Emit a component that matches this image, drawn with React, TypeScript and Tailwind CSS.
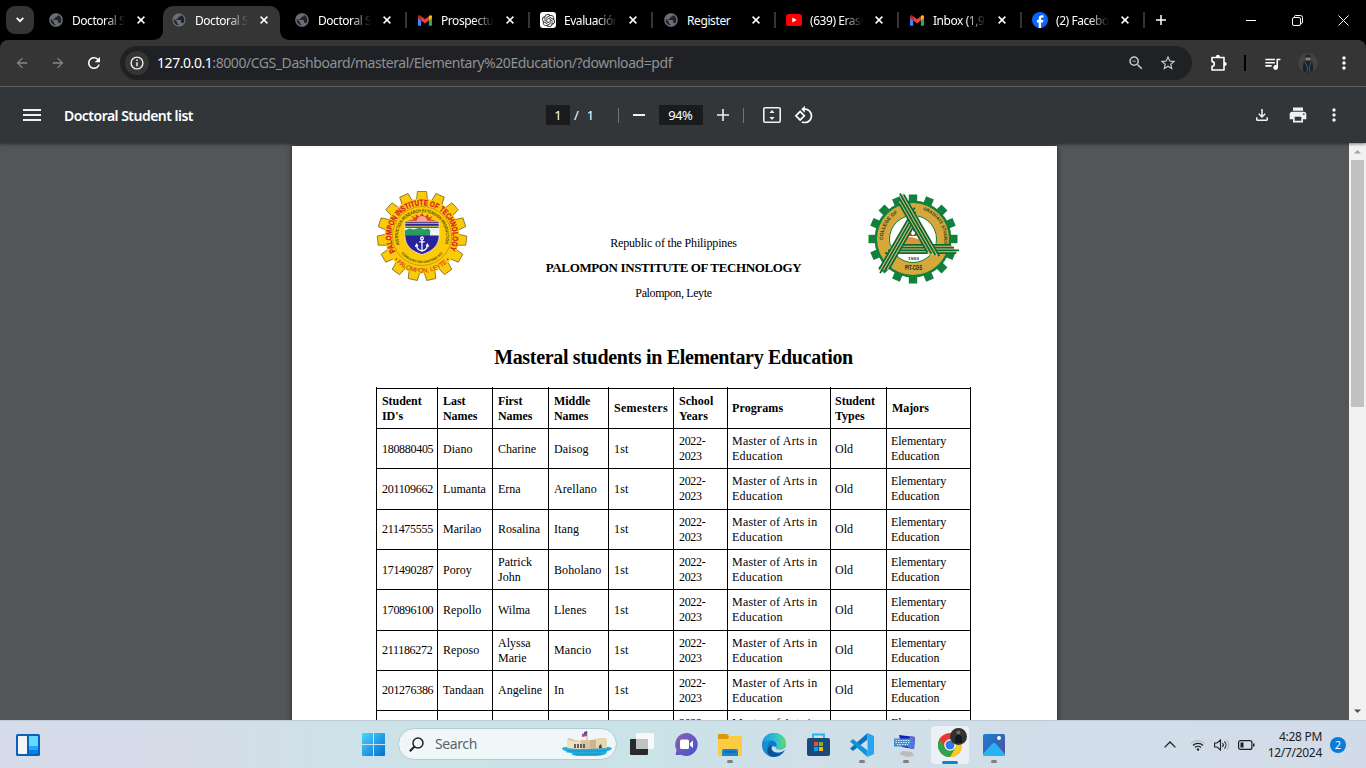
import React from "react";
import {
  MdArrowBack, MdArrowForward, MdRefresh, MdZoomOut, MdStarBorder, MdQueueMusic,
  MdMoreVert, MdMenu, MdPrint, MdOutlineFileDownload, MdRotate90DegreesCcw, MdPublic,
} from "react-icons/md";
import { SiOpenai } from "react-icons/si";

const ui = "font-['Noto_Sans','Open_Sans',sans-serif]";

function Globe() {
  return (
    <span className="flex h-[14px] w-[14px] rounded-full bg-[#20242a]">
      <MdPublic className="-m-px h-4 w-4 shrink-0 text-[#6b6f75]" />
    </span>
  );
}

function Gmail() {
  return (
    <svg viewBox="0 0 16 12" className="h-[11px] w-[14px]">
      <path d="M0 1.5V11a1 1 0 0 0 1 1h2.6V5.5z" fill="#4285f4" />
      <path d="M16 1.5V11a1 1 0 0 1-1 1h-2.6V5.5z" fill="#34a853" />
      <path d="M12.4 1.2V6L16 3.2V1.6C16 .1 14.300-.5 13.300.4z" fill="#fbbc04" />
      <path d="M3.600 6V1.200L8 4.600l4.400-3.400V6L8 9.300z" fill="#ea4335" />
      <path d="M0 1.600v1.600L3.600 6V1.200L2.700.4C1.700-.5 0 .1 0 1.600z" fill="#c5221f" />
    </svg>
  );
}

function Gpt() {
  return (
    <span className="flex h-4 w-4 items-center justify-center rounded-[3px] bg-white">
      <SiOpenai className="h-[13px] w-[13px] text-[#222]" />
    </span>
  );
}

function YouTube() {
  return (
    <svg viewBox="0 0 16 12" className="h-3 w-4">
      <rect width="16" height="12" rx="2.600" fill="#f00" />
      <path d="M6.300 3.500v5L10.700 6z" fill="#fff" />
    </svg>
  );
}

function Facebook() {
  return (
    <svg viewBox="0 0 16 16" className="h-4 w-4">
      <circle cx="8" cy="8" r="8" fill="#0866ff" />
      <path d="M6.700 15.900V10.500H4.900V8h1.800V6.700c0-2.400 1.100-3.500 3.400-3.500.5 0 1.100.1 1.400.2v2.100h-.9c-1.100 0-1.500.4-1.500 1.500v1h2.300l-.4 2.500H9.100v5.400z" fill="#fff" />
    </svg>
  );
}

function Cross({ className }: { className: string }) {
  return (
    <svg viewBox="0 0 8 8" className={className}>
      <path d="M.6.600l6.800 6.800M7.400.600L.6 7.400" stroke="currentColor" strokeWidth="1.500" />
    </svg>
  );
}

const tabs = [
  { icon: <Globe />, title: "Doctoral Student list", fade: true },
  { icon: <Globe />, title: "Doctoral Student list", active: true, fade: true },
  { icon: <Globe />, title: "Doctoral Student list", sep: true, fade: true },
  { icon: <Gmail />, title: "Prospectus", sep: true, fade: true },
  { icon: <Gpt />, title: "Evaluación", sep: true, fade: true },
  { icon: <Globe />, title: "Register", sep: true },
  { icon: <YouTube />, title: "(639) Erasmus", sep: true, fade: true },
  { icon: <Gmail />, title: "Inbox (1,932)", sep: true, fade: true },
  { icon: <Facebook />, title: "(2) Facebook", sep: true, fade: true },
];

function TabStrip() {
  return (
    <div className="flex h-10 shrink-0 bg-black text-white">
      <div className="flex w-10 shrink-0 pl-1.5 pt-1.5">
        <div className="flex h-7 w-7 items-center justify-center rounded-[9px] bg-[#353535]">
          <svg viewBox="0 0 8 6" className="h-1.5 w-2"><path d="M.7.800L4 4.200 7.300.800" fill="none" stroke="#fff" strokeWidth="1.700" /></svg>
        </div>
      </div>
      {tabs.map((t, i) => (
        <div key={i} className="relative flex h-full w-[123px] shrink-0 pt-1.5">
          <div className={t.active ? "flex h-[34px] w-[117px] items-start rounded-t-[10px] bg-[#353535]" : "flex h-[34px] w-[117px] items-start"}>
            <div className="ml-2 flex h-7 w-4 items-center justify-center">{t.icon}</div>
            <div className={t.fade
              ? "ml-2 h-7 w-[53px] overflow-hidden whitespace-nowrap text-[12px] leading-[30px] tracking-[-0.45px] [mask-image:linear-gradient(to_right,black_62%,transparent_100%)]"
              : "ml-2 h-7 w-[53px] overflow-hidden whitespace-nowrap text-[12px] leading-[30px] tracking-[-0.4px]"}>{t.title}</div>
            <div className="ml-3 flex h-7 w-2 items-center"><Cross className="h-2 w-2" /></div>
          </div>
          {t.sep && <div className="mt-1.5 ml-[2px] h-4 w-[2px] bg-[#353535]" />}
          {t.active && (
            <>
              <svg viewBox="0 0 10 10" className="absolute -left-2.5 bottom-0 h-2.5 w-2.5"><path d="M10 0v10H0C6 10 10 6 10 0z" fill="#353535" /></svg>
              <svg viewBox="0 0 10 10" className="absolute left-[117px] bottom-0 h-2.5 w-2.5"><path d="M0 0v10h10C4 10 0 6 0 0z" fill="#353535" /></svg>
            </>
          )}
        </div>
      ))}
      <div className="flex w-[28px] items-center justify-center">
        <svg viewBox="0 0 10 10" className="h-2.5 w-2.5"><path d="M5 0v10M0 5h10" stroke="#fff" strokeWidth="1.500" /></svg>
      </div>
      <div className="ml-auto flex items-center">
        <div className="flex w-[46px] justify-center"><div className="h-px w-2.5 bg-white" /></div>
        <div className="flex w-[46px] justify-center">
          <svg viewBox="0 0 11 11" className="h-[11px] w-[11px]" fill="none" stroke="#fff">
            <rect x=".5" y="2.500" width="8" height="8" rx="1.500" /><path d="M2.500 2V1.500a1 1 0 0 1 1-1H8.500a2 2 0 0 1 2 2V7a1.500 1.500 0 0 1-1.500 1.500" />
          </svg>
        </div>
        <div className="flex w-[46px] justify-center">
          <svg viewBox="0 0 11 11" className="h-[11px] w-[11px]" stroke="#fff"><path d="M.5.500l10 10M10.500.500l-10 10" /></svg>
        </div>
      </div>
    </div>
  );
}

function AddressBar() {
  return (
    <div className="h-[47px] shrink-0 bg-black">
      <div className="flex h-full items-center rounded-t-lg border-b border-[#696969] bg-[#353535]">
        <MdArrowBack className="ml-[14px] h-4 w-4 text-[#858585]" />
        <MdArrowForward className="ml-5 h-4 w-4 text-[#858585]" />
        <MdRefresh className="ml-[19px] h-[18px] w-[18px] text-white" />
        <div className="ml-[17px] flex h-[34px] w-[1072px] items-center rounded-full bg-[#202124]">
          <div className="ml-[5px] flex h-6 w-6 items-center justify-center rounded-full bg-[#353535]">
            <svg viewBox="0 0 14 14" className="h-[14px] w-[14px]"><circle cx="7" cy="7" r="5.900" fill="none" stroke="#eee" strokeWidth="1.400" /><path d="M7 6.200v4M7 3.500v1.500" stroke="#eee" strokeWidth="1.500" /></svg>
          </div>
          <div className="ml-2 whitespace-nowrap text-[14px] leading-5 tracking-[-0.44px] text-[#8f9195]">
            <span className="text-white">127.0.0.1</span>:8000/CGS_Dashboard/masteral/Elementary%20Education/?download=pdf
          </div>
          <MdZoomOut className="ml-auto h-[18px] w-[18px] text-[#c7c7c7]" />
          <MdStarBorder className="ml-[14px] mr-[15px] h-[18px] w-[18px] text-[#c7c7c7]" />
        </div>
        <svg viewBox="0 0 18 18" className="ml-[18px] h-[18px] w-[18px]">
          <path d="M2 3.500H14V16H2V12.200a2.300 2.300 0 0 0 0-4.600z" fill="none" stroke="#fff" strokeWidth="1.600" strokeLinejoin="round" />
          <path d="M6 3.500V2.700a1.900 1.900 0 0 1 3.800 0v.8zM14 8h.8a1.900 1.900 0 0 1 0 3.800H14z" fill="#fff" />
        </svg>
        <div className="ml-[16px] h-4 w-[2px] bg-black" />
        <MdQueueMusic className="ml-[17px] h-[19px] w-[19px] text-white" />
        <svg viewBox="0 0 20 20" className="ml-[16px] h-5 w-5">
          <circle cx="10" cy="10" r="10" fill="#424242" />
          <path d="M5 18V12c0-3 2-4.500 5-4.500s5 1.500 5 4.500v6a9 9 0 0 1-10 0z" fill="#17242b" />
          <path d="M7 9l2.500 6L9 19M13 9l-2 6 1 4" stroke="#35606b" fill="none" />
          <circle cx="10" cy="5" r="2.600" fill="#9b7668" /><path d="M7 4.500a3 3 0 0 1 6 0z" fill="#172b34" />
        </svg>
        <MdMoreVert className="ml-[16px] h-5 w-5 text-white" />
      </div>
    </div>
  );
}

function PdfToolbar() {
  return (
    <div className="relative z-10 flex h-14 shrink-0 items-center bg-[#323639] text-[#f1f1f1] shadow-[0_1px_3px_rgba(0,0,0,0.5)]">
      <div className="flex w-[546px] items-center">
        <MdMenu className="ml-5 h-6 w-6" />
        <div className="ml-5 mt-0.5 text-[14px] font-semibold leading-5 tracking-[-0.52px] text-white">Doctoral Student list</div>
      </div>
      <div className="flex items-center text-[13px] leading-5 text-white">
        <div className="flex h-5 w-6 items-center justify-center bg-[#191b1c]">1</div>
        <div className="ml-1">/</div>
        <div className="ml-[8px]">1</div>
        <div className="ml-[24px] h-[15px] w-px bg-[#707376]" />
        <div className="ml-[14px] h-[1.500px] w-3 bg-[#f1f1f1]" />
        <div className="ml-[14px] flex h-5 w-11 items-center justify-center bg-[#191b1c] pr-0.5 tracking-[-0.5px]">94%</div>
        <svg viewBox="0 0 12 12" className="ml-[14px] h-3 w-3"><path d="M6 0v12M0 6h12" stroke="#f1f1f1" strokeWidth="1.600" /></svg>
        <div className="ml-[14px] h-[15px] w-px bg-[#707376]" />
        <svg viewBox="0 0 18 16" className="ml-[19px] h-4 w-[18px]">
          <rect x=".8" y=".8" width="16.400" height="14.400" rx="1.300" fill="none" stroke="#f1f1f1" strokeWidth="1.600" />
          <path d="M9 3l2.600 3H6.400zM9 13l2.600-3H6.400z" fill="#f1f1f1" />
        </svg>
        <MdRotate90DegreesCcw className="ml-[13px] h-[20px] w-[20px]" />
      </div>
      <div className="ml-auto flex items-center gap-[16px] pr-[22px]">
        <MdOutlineFileDownload className="mr-px h-[18px] w-[18px]" />
        <MdPrint className="h-5 w-5" />
        <MdMoreVert className="h-5 w-5" />
      </div>
    </div>
  );
}

const teeth = (n: number) => Array.from({ length: n }, (_, i) => (i * 360) / n);

function InstituteSeal() {
  return (
    <svg viewBox="-46 -45 92 90" className="h-[90px] w-[92px]">
      <defs>
        <path id="pitTop" d="M-26.500 15.500A30.700 30.700 0 1 1 26.500 15.500" />
        <path id="pitMid" d="M-22.500 8.500A24 24 0 1 1 22.500 8.500" />
        <path id="pitLow" d="M-31.500 19A37 37 0 0 0 31.500 19" />
        <path id="pitLow2" d="M-22.500 15A27 27 0 0 0 22.500 15" />
      </defs>
      {teeth(15).map((a) => (
        <path key={a} d="M-5.500-36L-4.600-44.500H4.600L5.500-36z" transform={`rotate(${a})`} fill="#fccb07" stroke="#6a5926" strokeWidth=".7" />
      ))}
      <circle r="37.500" fill="#fccb07" />
      <circle r="29.500" fill="#fccb07" stroke="#8e6a17" strokeWidth=".5" />
      <text fill="#d41d20" fontSize="8" stroke="#d41d20" strokeWidth=".3" className="font-['Liberation_Sans',sans-serif] font-bold"><textPath href="#pitTop" textLength="126" lengthAdjust="spacingAndGlyphs">PALOMPON INSTITUTE OF TECHNOLOGY</textPath></text>
      <text fill="#54420f" fontSize="4.500" className="font-['Liberation_Sans',sans-serif] font-bold"><textPath href="#pitMid" textLength="91" lengthAdjust="spacingAndGlyphs">INSTRUCTION RESEARCH EXTENSION PRODUCTION</textPath></text>
      <text fill="#c12222" fontSize="6.500" className="font-['Liberation_Sans',sans-serif]"><textPath href="#pitLow" startOffset="6" textLength="63" lengthAdjust="spacingAndGlyphs">• PALOMPON, LEYTE •</textPath></text>
      <text fill="#54420f" fontSize="3.400" className="font-['Liberation_Sans',sans-serif] font-bold"><textPath href="#pitLow2" startOffset="3" textLength="47" lengthAdjust="spacingAndGlyphs">ESTABLISHED 1964 CHARTERED 1972</textPath></text>
      <g transform="translate(0 -1.500) scale(.9 .98)">
        <path d="M-19-13.500H19V1C19 11 12 17 0 20.500-12 17-19 11-19 1z" fill="#28229b" stroke="#fff" strokeWidth=".7" />
        <path d="M-17-14L-9-15.500-12-19-7-17-7-21-3-18 0-22 3-18 7-21 7-17 12-19 9-15.500 17-14z" fill="#e23b2e" />
        <path d="M-6-13.500a6 5.500 0 0 1 12 0z" fill="#f7a79a" />
        <path d="M-19-11.500H19M-19-8.500H19" stroke="#e8d03d" strokeWidth="1.100" />
        <path d="M-19-7H19V0H-19z" fill="#dff3ee" />
        <path d="M-19-4l5-2 5 1 6-2 6 2 4-1 3 3V1H-19z" fill="#299b62" />
        <path d="M9-4h10v5H9z" fill="#f4f7ee" />
        <g stroke="#fff" fill="none" strokeWidth="1.400"><circle cy="4" r="1.500" /><path d="M0 5.500V16M-3 7.500H3M-6 10.500C-6 15-3 16 0 17 3 16 6 15 6 10.500M-7.500 12.500L-6 10l1.500 2M7.500 12.500L6 10 4.500 12" /></g>
      </g>
    </svg>
  );
}

function CollegeSeal() {
  return (
    <svg viewBox="-46 -48 94 94" className="h-[94px] w-[94px]">
      <defs>
        <path id="cgsL" d="M-30 2A30 30 0 0 1-12-27.500" />
        <path id="cgsR" d="M10-29A30.500 30.500 0 0 1 31 4" />
      </defs>
      {teeth(16).map((a) => (
        <path key={a} d="M-4.200-36V-44.500H4.200V-36z" transform={`rotate(${a})`} fill="#10803f" />
      ))}
      <circle r="38.500" fill="#10803f" />
      <circle r="36" fill="#d6a73a" />
      <circle r="23.500" fill="#fff" stroke="#10803f" strokeWidth="1" />
      <path d="M-12 3C-8-2-4-3 2-1L13 3v2h-25z" fill="#dc9637" />
      <path d="M-4-3C-7-8-4-11-3-14l2 4 2-6 2 6 2-3c1 5 0 8-2 10z" fill="#d5312c" />
      <path d="M-1-4c-2-3 0-4 0-6l2 3 1-2c1 2 0 4-1 5z" fill="#fff" />
      {[0, 120, 240].map((a) => (
        <g key={a} transform={`rotate(${a})`}>
          <path d="M-21 5.500H38L45 14.500H-27z" fill="#d9c277" />
          <path d="M-19 5.800H38M-22 8.600H41M-25 11.400H46M-28 14.200H43" stroke="#0e6a35" strokeWidth="1.800" />
        </g>
      ))}
      <text fill="#263d19" fontSize="5" className="font-['Liberation_Sans',sans-serif] font-bold"><textPath href="#cgsL" startOffset="1" textLength="32" lengthAdjust="spacingAndGlyphs">COLLEGE OF</textPath></text>
      <text fill="#263d19" fontSize="4.500" className="font-['Liberation_Sans',sans-serif] font-bold"><textPath href="#cgsR" textLength="43" lengthAdjust="spacingAndGlyphs">GRADUATE STUDIES</textPath></text>
      <text y="20.800" x="-5" fill="#333" fontSize="4" textLength="11" lengthAdjust="spacingAndGlyphs" className="font-['Liberation_Sans',sans-serif] font-bold">1993</text>
      <text y="31" x="-8" fill="#222" fontSize="6.300" textLength="17" lengthAdjust="spacingAndGlyphs" className="font-['Liberation_Sans',sans-serif] font-bold">PIT-CGS</text>
    </svg>
  );
}

const heads = ["Student\nID's", "Last\nNames", "First\nNames", "Middle\nNames", "Semesters", "School\nYears", "Programs", "Student\nTypes", "Majors"];
const students = [
  ["180880405", "Diano", "Charine", "Daisog"],
  ["201109662", "Lumanta", "Erna", "Arellano"],
  ["211475555", "Marilao", "Rosalina", "Itang"],
  ["171490287", "Poroy", "Patrick\nJohn", "Boholano"],
  ["170896100", "Repollo", "Wilma", "Llenes"],
  ["211186272", "Reposo", "Alyssa\nMarie", "Mancio"],
  ["201276386", "Tandaan", "Angeline", "In"],
  ["", "", "", ""],
];
const rowHeights = ["h-10", "h-[41px]", "h-10", "h-10", "h-[41px]", "h-10", "h-10", "h-10"];
const cols = "grid grid-cols-[61px_55px_56px_60px_65px_54px_103px_56px_84px]";
const headStyles = [
  "tracking-[-0.05px]", "tracking-[-0.05px]", "tracking-[-0.05px]", "tracking-[-0.05px]", "tracking-[0.28px]", "tracking-[0.05px]",
  "-ml-px tracking-[0.1px]", "-ml-px tracking-[0px]", "tracking-[-0.1px]",
];
const cellStyles = [
  "tracking-[-0.3px]", "tracking-[0.05px]", "tracking-[0px]", "tracking-[0.1px]", "tracking-[0.15px]", "tracking-[-0.34px]",
  "-ml-px tracking-[0.22px]", "-ml-px tracking-[0px]", "-ml-px tracking-[-0.02px]",
];

function StudentTable() {
  return (
    <div className="w-[595px] border-r border-black text-[12px] leading-[15px] text-black">
      <div className={`${cols} h-px`}>{heads.map((h) => <div key={h} className="border-l border-black" />)}</div>
      <div className={`${cols} h-10 font-bold`}>
        {heads.map((h, i) => (
          <div key={h} className="flex items-center whitespace-pre border-l border-t border-black pl-[5px]"><span className={headStyles[i]}>{h}</span></div>
        ))}
      </div>
      {students.map((s, r) => (
        <div key={r} className={`${cols} ${rowHeights[r]}`}>
          {[...s, s[0] ? "1st" : "", "2022-\n2023", "Master of Arts in\nEducation", s[0] ? "Old" : "", "Elementary\nEducation"].map((c, i) => {
            const two = c.includes("\n");
            const tall = r === 1 || r === 4;
            const low = two ? !tall : tall || r === 0 || r === 3;
            return (
              <div key={i} className={low
                ? "flex items-center whitespace-pre border-l border-t border-black pl-[5px] pt-px"
                : "flex items-center whitespace-pre border-l border-t border-black pb-px pl-[5px]"}><span className={cellStyles[i]}>{c}</span></div>
            );
          })}
        </div>
      ))}
    </div>
  );
}

function Viewer() {
  return (
    <div className="flex min-h-0 flex-1 bg-[#525659]">
      <div className="flex flex-1 justify-center overflow-hidden pt-[3px]">
        <div className="h-[900px] w-[765px] shrink-0 bg-white px-[84px] pt-[45px] font-['Liberation_Serif',serif] text-black shadow-[0_0_5px_rgba(0,0,0,0.6)]">
          <div className="flex h-[120px]">
            <InstituteSeal />
            <div className="flex w-[411px] flex-col items-center pt-[44px] text-[12px]">
              <div className="h-[25px] whitespace-nowrap leading-4 tracking-[-0.16px]">Republic of the Philippines</div>
              <div className="h-[25px] whitespace-nowrap text-[13px] font-bold leading-4 tracking-[-0.37px]">PALOMPON INSTITUTE OF TECHNOLOGY</div>
              <div className="whitespace-nowrap leading-4 tracking-[-0.38px]">Palompon, Leyte</div>
            </div>
            <div className="-ml-[12px] w-[94px] shrink-0"><CollegeSeal /></div>
          </div>
          <div className="mt-[34px] h-[42px] whitespace-nowrap pr-0.5 text-center text-[20px] font-bold leading-[25px] tracking-[-0.33px]">Masteral students in Elementary Education</div>
          <StudentTable />
        </div>
      </div>
      <div className="flex w-[17px] flex-col items-center bg-[#f1f1f1]">
        <svg viewBox="0 0 17 17" className="h-[17px] w-[17px]"><path d="M5 10.500h7L8.500 7z" fill="#a3a3a3" /></svg>
        <div className="h-[247px] w-[13px] bg-[#c1c1c1]" />
        <svg viewBox="0 0 17 17" className="mt-auto h-[17px] w-[17px]"><path d="M5 6.500h7L8.500 10z" fill="#505050" /></svg>
      </div>
    </div>
  );
}

function TaskIcon({ children, open }: { children: React.ReactNode; open?: boolean }) {
  return (
    <div className="relative flex h-[47px] w-11 shrink-0 items-center justify-center">
      {children}
      {open && <div className="absolute bottom-[5px] h-[3px] w-1.5 rounded-full bg-[#7b7f84]" />}
    </div>
  );
}

function Taskbar() {
  return (
    <div className={`${ui} flex h-12 shrink-0 border-t border-[#bccbd4] bg-[linear-gradient(90deg,#d6dbe9_0%,#d5dce8_14%,#cce2e8_28%,#c9e3e7_48%,#d0dfe8_58%,#d2dce8_100%)]`}>
      <div className="flex w-[351px] items-center pl-4">
        <svg viewBox="0 0 24 22" className="h-[22px] w-6">
          <rect width="24" height="22" rx="1.500" fill="#0b61b5" /><rect x="2" y="2" width="9" height="18" rx=".7" fill="#f5f5f5" />
          <path d="M13 2h9v10h-9z" fill="#65d9ff" /><path d="M13 12h9v4h-9z" fill="#22a8fb" /><path d="M13 16h9v4h-9z" fill="#0780e8" />
        </svg>
      </div>
      <TaskIcon>
        <svg viewBox="0 0 23 23" className="h-[23px] w-[23px]">
          <defs><linearGradient id="win" x1="0" y1="0" x2="1" y2="1"><stop stopColor="#4cd3ff" /><stop offset="1" stopColor="#006fd0" /></linearGradient></defs>
          <path d="M1 0h10v11H0V1a1 1 0 0 1 1-1zM12 0h10a1 1 0 0 1 1 1v10H12zM0 12h11v11H1a1 1 0 0 1-1-1zM12 12h11v10a1 1 0 0 1-1 1H12z" fill="url(#win)" />
        </svg>
      </TaskIcon>
      <div className="ml-[3px] mr-[3px] mt-[7px] flex h-8 w-[219px] shrink-0 items-center rounded-full border border-[#b5cbd3] bg-[#f0f7f9]">
        <svg viewBox="0 0 15 15" className="ml-2.5 h-[15px] w-[15px]"><circle cx="9" cy="6" r="5" fill="none" stroke="#222" strokeWidth="1.500" /><path d="M5.500 9.500L.8 14.200" stroke="#222" strokeWidth="2" /></svg>
        <div className="ml-[11px] text-[14px] leading-5 tracking-[-0.4px] text-[#5c6367]">Search</div>
        <svg viewBox="0 0 52 26" className="ml-auto mr-[3px] h-[26px] w-[52px]">
          <path d="M1 17c6-3 44-3 50 0-1 3-5 3-6 4 3 1-3 4-10 4H20c-8 0-12-2-8-3-6 0-9-1-6-2-3 0-5-1-5-3z" fill="#25addd" />
          <path d="M7 20h38M14 23h26" stroke="#1489c3" strokeWidth=".8" />
          <path d="M6 8l3-1c5 3 8 3 12 2h8l1 9H20l-14-1z" fill="#d8c5a3" /><path d="M6 8c6 3 10 3 14 2v8l-14-1z" fill="#efe0c0" />
          <path d="M29 9c5 0 8-2 13-2l4 1v9l-17 1z" fill="#cdb48e" /><path d="M35 8l7-1 4 1v9H35z" fill="#e8d6b2" />
          <path d="M14 13v4M17 13v4M20 13v4M23 13v4" stroke="#43404a" strokeWidth="1.600" /><path d="M38 17v-2l2-2 1 4z" fill="#384152" />
          <path d="M26 9V0" stroke="#8a8582" strokeWidth=".6" /><path d="M21 3l5-2v4l-5 1z" fill="#d94555" /><path d="M23 1l3-1v3l-3 1z" fill="#3f5ca9" />
        </svg>
      </div>
      <TaskIcon>
        <svg viewBox="0 0 24 23" className="h-[23px] w-6"><rect x="6" y="0" width="18" height="16" rx="1" fill="#f8f8f8" /><rect y="6" width="18" height="16" rx="1" fill="#292929" /><path d="M6 6h12v10H6z" fill="#bfc2c2" /></svg>
      </TaskIcon>
      <TaskIcon>
        <svg viewBox="0 0 23 23" className="h-[23px] w-[23px]">
          <defs><linearGradient id="chat" x1="0" y1="0" x2="1" y2="1"><stop stopColor="#8a61b3" /><stop offset="1" stopColor="#4851cf" /></linearGradient></defs>
          <path d="M11.500 0a11.500 11.500 0 1 1-5 22H.5l1-5A11.500 11.500 0 0 1 11.500 0z" fill="url(#chat)" />
          <rect x="5" y="6.500" width="9" height="9.500" rx="1.500" fill="#fff" /><path d="M15 10l3-2.500v7.500l-3-2.500z" fill="#fff" />
        </svg>
      </TaskIcon>
      <TaskIcon open>
        <svg viewBox="0 0 24 22" className="h-[22px] w-6">
          <path d="M0 1a1 1 0 0 1 1-1h8l2 2v4H0z" fill="#d99a08" /><path d="M0 5h9l3-3h11a1 1 0 0 1 1 1v18a1 1 0 0 1-1 1H1a1 1 0 0 1-1-1z" fill="#fccb43" />
          <path d="M4 22v-5a2 2 0 0 1 2-2h12a2 2 0 0 1 2 2v5z" fill="#1683d4" /><path d="M7 18h10" stroke="#0c5d9e" strokeWidth="1.300" />
        </svg>
      </TaskIcon>
      <TaskIcon>
        <svg viewBox="0 0 24 24" className="h-6 w-6">
          <defs><linearGradient id="edge" x1="0" x2="1"><stop stopColor="#179bd8" /><stop offset=".6" stopColor="#30c4d2" /><stop offset="1" stopColor="#65dc5b" /></linearGradient></defs>
          <circle cx="12" cy="12" r="12" fill="#1478ca" />
          <path d="M.2 10C1 4 6 0 12 0c7 0 12 5 12 10 0 4-3 6.500-7 6.500-3 0-4-1-3-2.500 2-3-1-6.500-5-6.500-4 0-7 2.500-8.800 2.500z" fill="url(#edge)" />
          <path d="M9.500 8C3 10 5 22 13 24 8 24.500 1 20 .5 13 2 8 7 7 9.500 8z" fill="#168ed4" />
          <path d="M9.200 12c-2 5 3 9.500 8 8.500 2-.2 4-2 5-2.800-4 6-12 7.500-15 4.300-4-4-1-9 2-10z" fill="#124c93" />
          <path d="M24 11c0 4-3 5.500-7 5.500-3 0-4-1-3-2.500-3-2-5 0-4 2.500 1 3 8 4.500 12.500.8L24 17z" fill="#cfdfe7" />
        </svg>
      </TaskIcon>
      <TaskIcon>
        <svg viewBox="0 0 23 23" className="h-[23px] w-[23px]">
          <path d="M6 7V1.500h11V7" fill="none" stroke="#24b5e8" strokeWidth="1.800" /><rect y="5" width="23" height="18" rx="2" fill="#194a7b" />
          <path d="M7 9h4v4H7z" fill="#f25022" /><path d="M12 9h4v4h-4z" fill="#7fba00" /><path d="M7 14h4v4H7z" fill="#00a4ef" /><path d="M12 14h4v4h-4z" fill="#ffb900" />
        </svg>
      </TaskIcon>
      <TaskIcon open>
        <svg viewBox="0 0 24 24" className="h-6 w-6">
          <path d="M17.500 0v6.500L3 18 0 15.500z" fill="#0874bb" /><path d="M17.500 24v-6.500L3 6 0 8.500z" fill="#1691d9" /><path d="M17.500 0L24 3v18l-6.500 3z" fill="#26a5f0" />
        </svg>
      </TaskIcon>
      <TaskIcon open>
        <svg viewBox="0 0 24 24" className="h-6 w-6">
          <path d="M4 1l19 1-1 17-14-2z" fill="#d9dde0" /><path d="M5 2l16 2-1 12-12-2z" fill="#151bb4" /><path d="M16 3l5 1-1 12-6-1z" fill="#5373df" />
          <path d="M9 18l9 1 2 4-7 1-8-3z" fill="#bbb" /><rect y="5.500" width="17" height="8" fill="#3e8ed5" />
          <path d="M1.500 7.500h14M1.500 9.500h14M3 11.500h11" stroke="#d8efff" strokeDasharray="1.500 1" />
        </svg>
      </TaskIcon>
      <div className="relative flex h-[47px] w-11 items-center justify-center">
        <div className="relative flex h-[38px] w-[38px] items-center justify-center rounded-[4px] bg-[#ebf0f6]">
          <svg viewBox="0 0 24 24" className="h-6 w-6">
            <circle cx="12" cy="12" r="12" fill="#e53b2c" />
            <path d="M1.600 6A12 12 0 0 0 12 24l5.200-9H6.800z" fill="#2da64b" />
            <path d="M12 24A12 12 0 0 0 22.400 6H12l5.200 9z" fill="#fccb23" />
            <circle cx="12" cy="12" r="5.800" fill="#fff" /><circle cx="12" cy="12" r="4.500" fill="#3578e5" />
          </svg>
          <svg viewBox="0 0 17 17" className="absolute right-[2px] top-[2px] h-[17px] w-[17px]"><circle cx="8.500" cy="8.500" r="8.500" fill="#303234" /><path d="M5 15V9l3.500-3L12 9v6z" fill="#111a1e" /><circle cx="8.500" cy="4.500" r="2" fill="#80665f" /></svg>
          <div className="absolute bottom-0 h-[3px] w-4 rounded-full bg-[#1282d6]" />
        </div>
      </div>
      <TaskIcon open>
        <svg viewBox="0 0 22 22" className="h-[22px] w-[22px]">
          <defs><linearGradient id="photo" x1="0" y1="0" x2="1" y2="1"><stop stopColor="#1681d8" /><stop offset="1" stopColor="#534b9b" /></linearGradient></defs>
          <rect width="22" height="22" rx="2" fill="url(#photo)" /><path d="M0 20L9 10a3 3 0 0 1 4 0l9 10a2 2 0 0 1-2 2H2a2 2 0 0 1-2-2z" fill="#28b3f2" /><circle cx="16" cy="4" r="2" fill="#fff" />
        </svg>
      </TaskIcon>
      <div className="ml-auto flex items-center pr-5 text-[#1c2024]">
        <svg viewBox="0 0 12 7" className="h-[7px] w-3"><path d="M.6 6.400L6 1l5.400 5.400" fill="none" stroke="currentColor" strokeWidth="1.300" /></svg>
        <svg viewBox="0 0 16 12" className="ml-[14px] h-3 w-4" fill="none" stroke="currentColor">
          <path d="M1 4.500a10 10 0 0 1 14 0" stroke="#aab4bb" /><path d="M3 6.500a7 7 0 0 1 10 0M5 8.500a4.300 4.300 0 0 1 6 0" strokeWidth="1.200" /><circle cx="8" cy="10.500" r="1.200" fill="currentColor" stroke="none" />
        </svg>
        <svg viewBox="0 0 16 12" className="ml-[8px] h-3 w-4" fill="none" stroke="currentColor">
          <path d="M.6 4h2.400l3.500-3v10L3 8H.6z" strokeWidth="1.100" /><path d="M8.500 4a3 3 0 0 1 0 4M10.500 2.300a5.500 5.500 0 0 1 0 7.400" strokeWidth="1.100" /><path d="M12.800 1a8 8 0 0 1 0 10" stroke="#aab4bb" />
        </svg>
        <svg viewBox="0 0 17 10" className="ml-[8px] h-2.5 w-[17px]"><rect x=".6" y=".6" width="13.300" height="8.800" rx="2" fill="none" stroke="currentColor" strokeWidth="1.200" /><path d="M2.500 2.500h3v5h-3zM15 3.500h1.500v3H15z" fill="currentColor" /></svg>
        <div className="ml-[6px] w-[61px] whitespace-nowrap text-right text-[12px] leading-4 tracking-[-0.3px]">
          <div>4:28 PM</div>
          <div>12/7/2024</div>
        </div>
        <div className="ml-2 flex h-4 w-4 items-center justify-center rounded-full bg-[#0a7bd6] text-[11px] leading-4 text-white">2</div>
      </div>
    </div>
  );
}

export default function App() {
  return (
    <div className={`${ui} flex h-[768px] w-[1366px] flex-col overflow-hidden`}>
      <TabStrip />
      <AddressBar />
      <PdfToolbar />
      <Viewer />
      <Taskbar />
    </div>
  );
}
